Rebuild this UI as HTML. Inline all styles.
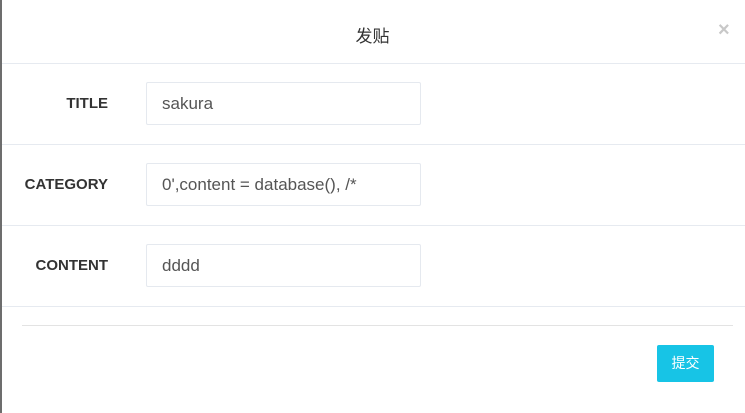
<!DOCTYPE html>
<html><head><meta charset="utf-8"><style>
body{margin:0;width:745px;height:413px;background:#fff;position:relative;overflow:hidden;font-family:"Liberation Sans","Noto Sans CJK SC",sans-serif}
.edge{position:absolute;left:0;top:0;width:2px;height:413px;background:#6d6d6d}
.title{position:absolute;top:22px;left:0;width:745px;text-align:center;font-size:17px;color:#333}
.x{position:absolute;left:718px;top:19px;font-size:20px;color:#c8c8c8;font-weight:bold}
.line{position:absolute;left:2px;right:0;height:1px;background:#e6eaf0}
.lbl{position:absolute;right:637px;font-size:15px;font-weight:bold;color:#333}
.inp{position:absolute;left:146px;height:41px;border:1px solid #e5e9ef;border-radius:2px;box-sizing:content-box;font-size:17px;color:#555;line-height:42px;padding-left:15px;width:258px;white-space:nowrap}
.hr{position:absolute;left:22px;width:711px;top:325px;height:1px;background:#e3e3e3}
.btn{position:absolute;left:657px;top:345px;width:57px;height:37px;background:#17c4e6;border-radius:2px;color:#fff;font-size:14px;text-align:center;line-height:37px}
</style></head><body>
<div class="edge"></div>
<div class="title">发贴</div>
<div class="x">×</div>
<div class="line" style="top:63px"></div>
<div class="lbl" style="top:95px">TITLE</div>
<div class="inp" style="top:82px">sakura</div>
<div class="line" style="top:144px"></div>
<div class="lbl" style="top:176px">CATEGORY</div>
<div class="inp" style="top:163px">0',content = database(), /*</div>
<div class="line" style="top:225px"></div>
<div class="lbl" style="top:257px">CONTENT</div>
<div class="inp" style="top:244px">dddd</div>
<div class="line" style="top:306px"></div>
<div class="hr"></div>
<div class="btn">提交</div>
</body></html>
